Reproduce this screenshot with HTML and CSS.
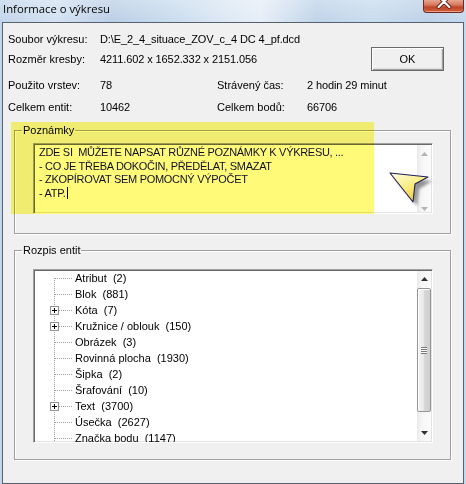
FILE: index.html
```html
<!DOCTYPE html>
<html lang="cs">
<head>
<meta charset="utf-8">
<title>Informace o výkresu</title>
<link rel="stylesheet" href="styles.css">
</head>
<body>
<div class="window">
  <div class="titlebar">
    <span class="title">Informace o výkresu</span>
    <span class="close">
      <svg width="41" height="13" viewBox="0 0 41 13">
        <path d="M16 -4 L27 7 M27 -4 L16 7" stroke="#5a1a10" stroke-width="4" stroke-linecap="round" fill="none"/>
        <path d="M16 -4 L27 7 M27 -4 L16 7" stroke="#ffffff" stroke-width="2.2" stroke-linecap="round" fill="none"/>
      </svg>
    </span>
  </div>
  <div class="client">
    <div class="info">
      <span class="lbl">Soubor výkresu:</span>
      <span class="val span-all">D:\E_2_4_situace_ZOV_c_4 DC 4_pf.dcd</span>

      <span class="lbl">Rozměr kresby:</span>
      <span class="val span-two">4211.602 x 1652.332 x 2151.056</span>
      <button class="ok" type="button">OK</button>

      <span class="lbl">Použito vrstev:</span>
      <span class="val">78</span>
      <span class="lbl">Strávený čas:</span>
      <span class="val">2 hodin 29 minut</span>

      <span class="lbl">Celkem entit:</span>
      <span class="val">10462</span>
      <span class="lbl">Celkem bodů:</span>
      <span class="val">66706</span>
    </div>

    <fieldset class="group notes">
      <legend>Poznámky</legend>
      <div class="memo">
        <div class="memo-text">ZDE SI  MŮŽETE NAPSAT RŮZNÉ POZNÁMKY K VÝKRESU, ...
- CO JE TŘEBA DOKOČIN, PŘEDĚLAT, SMAZAT
- ZKOPÍROVAT SEM POMOCNÝ VÝPOČET
- ATP.<span class="caret"></span></div>
        <div class="scrollbar disabled">
          <svg class="arrow" width="7" height="4" viewBox="0 0 7 4"><polygon points="3.5,0 7,4 0,4" fill="#b4b4b4"/></svg>
          <svg class="arrow" width="7" height="4" viewBox="0 0 7 4"><polygon points="0,0 7,0 3.5,4" fill="#b4b4b4"/></svg>
        </div>
      </div>
    </fieldset>

    <fieldset class="group entities">
      <legend>Rozpis entit</legend>
      <div class="tree">
        <ul class="tree-list">
          <li class="first"><span class="branch"></span><span class="label">Atribut  (2)</span></li>
          <li><span class="branch"></span><span class="label">Blok  (881)</span></li>
          <li><span class="branch"><span class="plus"></span></span><span class="label">Kóta  (7)</span></li>
          <li><span class="branch"><span class="plus"></span></span><span class="label">Kružnice / oblouk  (150)</span></li>
          <li><span class="branch"></span><span class="label">Obrázek  (3)</span></li>
          <li><span class="branch"></span><span class="label">Rovinná plocha  (1930)</span></li>
          <li><span class="branch"></span><span class="label">Šipka  (2)</span></li>
          <li><span class="branch"></span><span class="label">Šrafování  (10)</span></li>
          <li><span class="branch"><span class="plus"></span></span><span class="label">Text  (3700)</span></li>
          <li><span class="branch"></span><span class="label">Úsečka  (2627)</span></li>
          <li><span class="branch"></span><span class="label">Značka bodu  (1147)</span></li>
        </ul>
        <div class="scrollbar active">
          <svg class="arrow up" width="7" height="4" viewBox="0 0 7 4"><polygon points="3.5,0 7,4 0,4" fill="#303030"/></svg>
          <div class="thumb"><span class="grip"></span></div>
          <svg class="arrow down" width="7" height="4" viewBox="0 0 7 4"><polygon points="0,0 7,0 3.5,4" fill="#303030"/></svg>
        </div>
      </div>
    </fieldset>

    <div class="highlight"></div>
    <svg class="pointer" width="50" height="44" viewBox="0 0 50 44">
      <defs>
        <linearGradient id="pg" x1="0" y1="0" x2="0.6" y2="1">
          <stop offset="0" stop-color="#fffde8"/>
          <stop offset="0.5" stop-color="#fbef8a"/>
          <stop offset="1" stop-color="#eccf3a"/>
        </linearGradient>
        <filter id="sh" x="-20%" y="-20%" width="160%" height="160%">
          <feGaussianBlur stdDeviation="1.6"/>
        </filter>
      </defs>
      <polygon points="8,9 46,13 33,21 31,38" fill="#6a6a6a" opacity="0.7" filter="url(#sh)"/>
      <polygon points="4,5 42,9 29,16 27,34" fill="url(#pg)" stroke="#1e1e5a" stroke-width="1.1" stroke-linejoin="round"/>
    </svg>
  </div>
</div>
</body>
</html>
```

FILE: styles.css
```css
html, body {
  margin: 0;
  padding: 0;
}

body {
  width: 466px;
  height: 484px;
  overflow: hidden;
  font-family: "Liberation Sans", Arial, sans-serif;
  font-size: 11px;
  color: #000;
}

.window {
  width: 466px;
  height: 484px;
  display: flex;
  flex-direction: column;
  background:
    linear-gradient(to bottom, rgba(255,255,255,0.25), rgba(255,255,255,0) 22px),
    linear-gradient(to right, #c2d5ea 0%, #d3e2f1 12%, #bccfe6 24%, #c9dbee 36%, #dfeaf5 50%, #e6eef7 56%, #c0d4e9 68%, #cadcee 80%, #bdd1e8 92%, #c6d8ec 100%);
}

.titlebar {
  height: 22px;
  flex: none;
  display: flex;
  justify-content: space-between;
  align-items: flex-start;
}

.title {
  font-family: "Open Sans", "Noto Sans", sans-serif;
  font-size: 11.3px;
  line-height: 18px;
  padding-left: 3px;
  color: #000;
}

.close {
  width: 41px;
  height: 13px;
  margin-right: 2px;
  box-sizing: border-box;
  border: 1px solid #6e2b1e;
  border-top: none;
  border-radius: 0 0 4px 4px;
  background: linear-gradient(to bottom, #e9a592 0%, #d87a60 40%, #c0452a 60%, #d0603e 100%);
  box-shadow: inset 0 -1px 0 rgba(255,200,180,0.6);
  overflow: hidden;
  display: flex;
}

.close svg {
  margin-left: -1px;
}

.client {
  margin: 0 2px;
  height: 462px;
  box-sizing: border-box;
  border: 1px solid #58626e;
  background: #f0f0f0;
  position: relative;
  display: flex;
  flex-direction: column;
}

/* info block */
.info {
  display: grid;
  grid-template-columns: 92px 117px 90px 1fr;
  grid-template-rows: 20px 26px 22px 13px;
  align-items: start;
  padding: 10px 0 0 5px;
  line-height: 13px;
}

.val {
  letter-spacing: -0.1px;
}

.span-all {
  grid-column: 2 / -1;
}

.span-two {
  grid-column: 2 / 4;
}

.ok {
  grid-column: 4;
  justify-self: end;
  align-self: start;
  margin: -6px 19px 0 0;
  width: 73px;
  height: 24px;
  box-sizing: border-box;
  padding: 0;
  font-family: "Liberation Sans", Arial, sans-serif;
  font-size: 11px;
  color: #000;
  background: #f0f0f0;
  border: 1px solid #6a6a6a;
  box-shadow: inset 1px 1px 0 #ffffff, inset -1px -1px 0 #a0a0a0, inset -2px -2px 0 #e0e0e0;
}

/* group boxes */
.group {
  box-sizing: border-box;
  width: 437px;
  margin: 0 0 0 11px;
  padding: 0 17px 0 18px;
  border: 1px solid #a0a0a0;
  box-shadow: inset 1px 1px 0 #ffffff, 1px 1px 0 #ffffff;
  min-width: 0;
}

.group legend {
  margin-left: -11px;
  padding: 0 1px;
  line-height: 13px;
  font-size: 11px;
}

.notes {
  margin-top: 10px;
  padding-top: 6px;
  padding-bottom: 19px;
}

.entities {
  margin-top: 10px;
  padding-top: 12px;
  padding-bottom: 16px;
}

/* sunken controls */
.memo,
.tree {
  box-sizing: border-box;
  width: 400px;
  display: flex;
  background: #ffffff;
  border: 1px solid;
  border-color: #a0a0a0 #ffffff #ffffff #a0a0a0;
  box-shadow: inset 1px 1px 0 #696969, inset -1px -1px 0 #e3e3e3;
  padding: 1px;
  overflow: hidden;
}

.memo {
  height: 71px;
}

.tree {
  height: 174px;
}

.memo-text {
  flex: 1;
  white-space: pre;
  color: #101058;
  line-height: 13.5px;
  padding: 1px 0 0 4px;
  font-size: 11px;
  letter-spacing: -0.3px;
}

.caret {
  display: inline-block;
  width: 1px;
  height: 12px;
  background: #000;
  vertical-align: -2px;
  margin-left: 1px;
}

/* scrollbars */
.scrollbar {
  width: 14px;
  flex: none;
  display: flex;
  flex-direction: column;
  align-items: center;
  background: linear-gradient(to right, #eaeaea, #f5f5f5 30%, #fbfbfb);
}

.scrollbar.disabled {
  justify-content: space-between;
  padding: 7px 0 1px;
  box-sizing: border-box;
}

.scrollbar.active {
  padding-top: 6px;
  box-sizing: border-box;
}

.arrow {
  display: block;
  flex: none;
}

.thumb {
  margin-top: 7px;
  width: 14px;
  height: 124px;
  box-sizing: border-box;
  border: 1px solid #959595;
  border-radius: 2px;
  background: linear-gradient(to right, #f4f4f4 0%, #e9e9e9 45%, #d6d6d6 55%, #cfcfcf 100%);
  box-shadow: inset 1px 1px 0 #ffffff;
  display: flex;
  align-items: center;
  justify-content: center;
}

.grip {
  display: block;
  width: 6px;
  height: 7px;
  background: repeating-linear-gradient(to bottom, #7a7a7a 0 1px, #f8f8f8 1px 2px);
}

.arrow.down {
  margin-top: 19px;
}

/* tree */
.tree-list {
  flex: 1;
  list-style: none;
  margin: -1px 0 0;
  padding: 0;
}

.tree-list li {
  height: 16px;
  display: flex;
  align-items: center;
}

.branch {
  width: 40px;
  height: 16px;
  flex: none;
  display: flex;
  align-items: center;
  background:
    repeating-linear-gradient(to right, #a0a0a0 0 1px, transparent 1px 2px) 20px 8px / 17px 1px no-repeat,
    repeating-linear-gradient(to bottom, #a0a0a0 0 1px, transparent 1px 2px) 19px 0 / 1px 16px no-repeat;
}

.tree-list li.first .branch {
  background:
    repeating-linear-gradient(to right, #a0a0a0 0 1px, transparent 1px 2px) 20px 8px / 17px 1px no-repeat,
    repeating-linear-gradient(to bottom, #a0a0a0 0 1px, transparent 1px 2px) 19px 8px / 1px 8px no-repeat;
}

.plus {
  width: 9px;
  height: 9px;
  margin-left: 15px;
  box-sizing: border-box;
  border: 1px solid #919191;
  background:
    linear-gradient(#000, #000) 1px 3px / 5px 1px no-repeat,
    linear-gradient(#000, #000) 3px 1px / 1px 5px no-repeat,
    #ffffff;
}

.label {
  white-space: pre;
  line-height: 16px;
}

/* overlays */
.highlight {
  position: absolute;
  left: 8px;
  top: 99px;
  width: 363px;
  height: 92px;
  background: #fffb78;
  mix-blend-mode: multiply;
  pointer-events: none;
}

.pointer {
  position: absolute;
  left: 383px;
  top: 145px;
}
```
